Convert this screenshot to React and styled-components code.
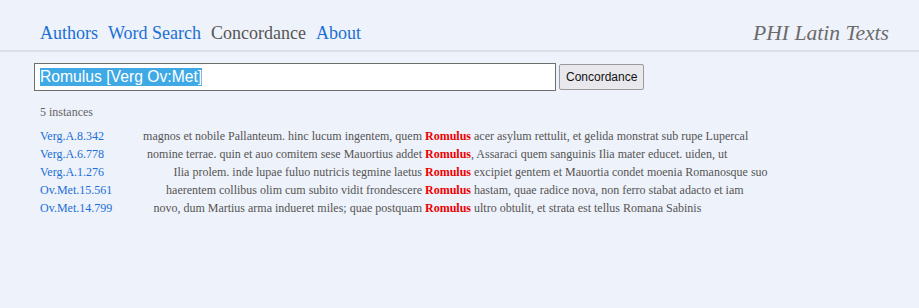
import React, { useEffect, useRef } from "react";
import styled, { createGlobalStyle } from "styled-components";

const GlobalStyle = createGlobalStyle`
    html, body {
        margin: 0;
        padding: 0;
        background-color: #eef2fa;
        font-family: "Liberation Serif", "Times New Roman", serif;
    }
`;

const Header = styled.header`
    display: flex;
    align-items: center;
    justify-content: space-between;
    height: 52px;
    padding: 0 30px 0 40px;
    box-sizing: border-box;
    border-bottom: 2px solid #dcdfe4;
`;

const Nav = styled.nav`
    display: flex;
    gap: 10px;
    padding-top: 16px;
`;

const NavLink = styled.a`
    font-size: 18px;
    color: ${(p) => (p.active ? "#555555" : "#1a6fd6")};
    text-decoration: none;
    cursor: pointer;
`;

const Title = styled.div`
    font-size: 21.6px;
    font-style: italic;
    color: #6b6b6b;
    padding-top: 16px;
`;

const Main = styled.main`
    padding: 11px 0 0 34px;
`;

const SearchForm = styled.form`
    display: flex;
    align-items: center;
    gap: 3px;
`;

const SearchInput = styled.input`
    width: 522px;
    height: 28px;
    box-sizing: border-box;
    border: 1px solid #6e6e6e;
    background: #ffffff;
    padding: 0 5px;
    font-family: "Liberation Sans", Arial, sans-serif;
    font-size: 15.7px;
    color: #222;
    outline: none;
    &::selection {
        background: #3fa9e6;
        color: #ffffff;
    }
`;

const SearchButton = styled.button`
    height: 26px;
    padding: 0 6px;
    font-family: "Liberation Sans", Arial, sans-serif;
    font-size: 12px;
    color: #111;
    background: #e9e9ed;
    border: 1px solid #9a9a9a;
    border-radius: 2px;
`;

const Results = styled.section`
    padding: 14px 0 0 6px;
`;

const Count = styled.div`
    font-size: 12px;
    color: #666666;
    margin-bottom: 7px;
`;

const Table = styled.div`
    display: grid;
    grid-template-columns: 100px 285px 1fr;
    font-size: 12px;
    line-height: 18px;
    color: #555555;
`;

const RefLink = styled.a`
    color: #1a6fd6;
    text-decoration: none;
    white-space: nowrap;
`;

const Left = styled.span`
    text-align: right;
    white-space: pre;
`;

const Right = styled.span`
    white-space: pre;
`;

const Keyword = styled.b`
    color: #ee0000;
`;

const rows = [
    ["Verg.A.8.342", "magnos et nobile Pallanteum. hinc lucum ingentem, quem ", " acer asylum rettulit, et gelida monstrat sub rupe Lupercal"],
    ["Verg.A.6.778", "nomine terrae. quin et auo comitem sese Mauortius addet ", ", Assaraci quem sanguinis Ilia mater educet. uiden, ut"],
    ["Verg.A.1.276", "Ilia prolem. inde lupae fuluo nutricis tegmine laetus ", " excipiet gentem et Mauortia condet moenia Romanosque suo"],
    ["Ov.Met.15.561", "haerentem collibus olim cum subito vidit frondescere ", " hastam, quae radice nova, non ferro stabat adacto et iam"],
    ["Ov.Met.14.799", "novo, dum Martius arma indueret miles; quae postquam ", " ultro obtulit, et strata est tellus Romana Sabinis"],
];

const App = () => {
    const inputRef = useRef(null);

    useEffect(() => {
        if (inputRef.current) {
            inputRef.current.focus();
            inputRef.current.select();
        }
    }, []);

    return (
        <>
            <GlobalStyle />
            <Header>
                <Nav>
                    <NavLink>Authors</NavLink>
                    <NavLink>Word Search</NavLink>
                    <NavLink active>Concordance</NavLink>
                    <NavLink>About</NavLink>
                </Nav>
                <Title>PHI Latin Texts</Title>
            </Header>
            <Main>
                <SearchForm onSubmit={(e) => e.preventDefault()}>
                    <SearchInput ref={inputRef} type="text" defaultValue="Romulus [Verg Ov:Met]" spellCheck="true" />
                    <SearchButton type="submit">Concordance</SearchButton>
                </SearchForm>
                <Results>
                    <Count>5 instances</Count>
                    <Table>
                        {rows.map(([ref, left, right]) => (
                            <React.Fragment key={ref}>
                                <RefLink>{ref}</RefLink>
                                <Left>{left}</Left>
                                <Right><Keyword>Romulus</Keyword>{right}</Right>
                            </React.Fragment>
                        ))}
                    </Table>
                </Results>
            </Main>
        </>
    );
};

export default App;
